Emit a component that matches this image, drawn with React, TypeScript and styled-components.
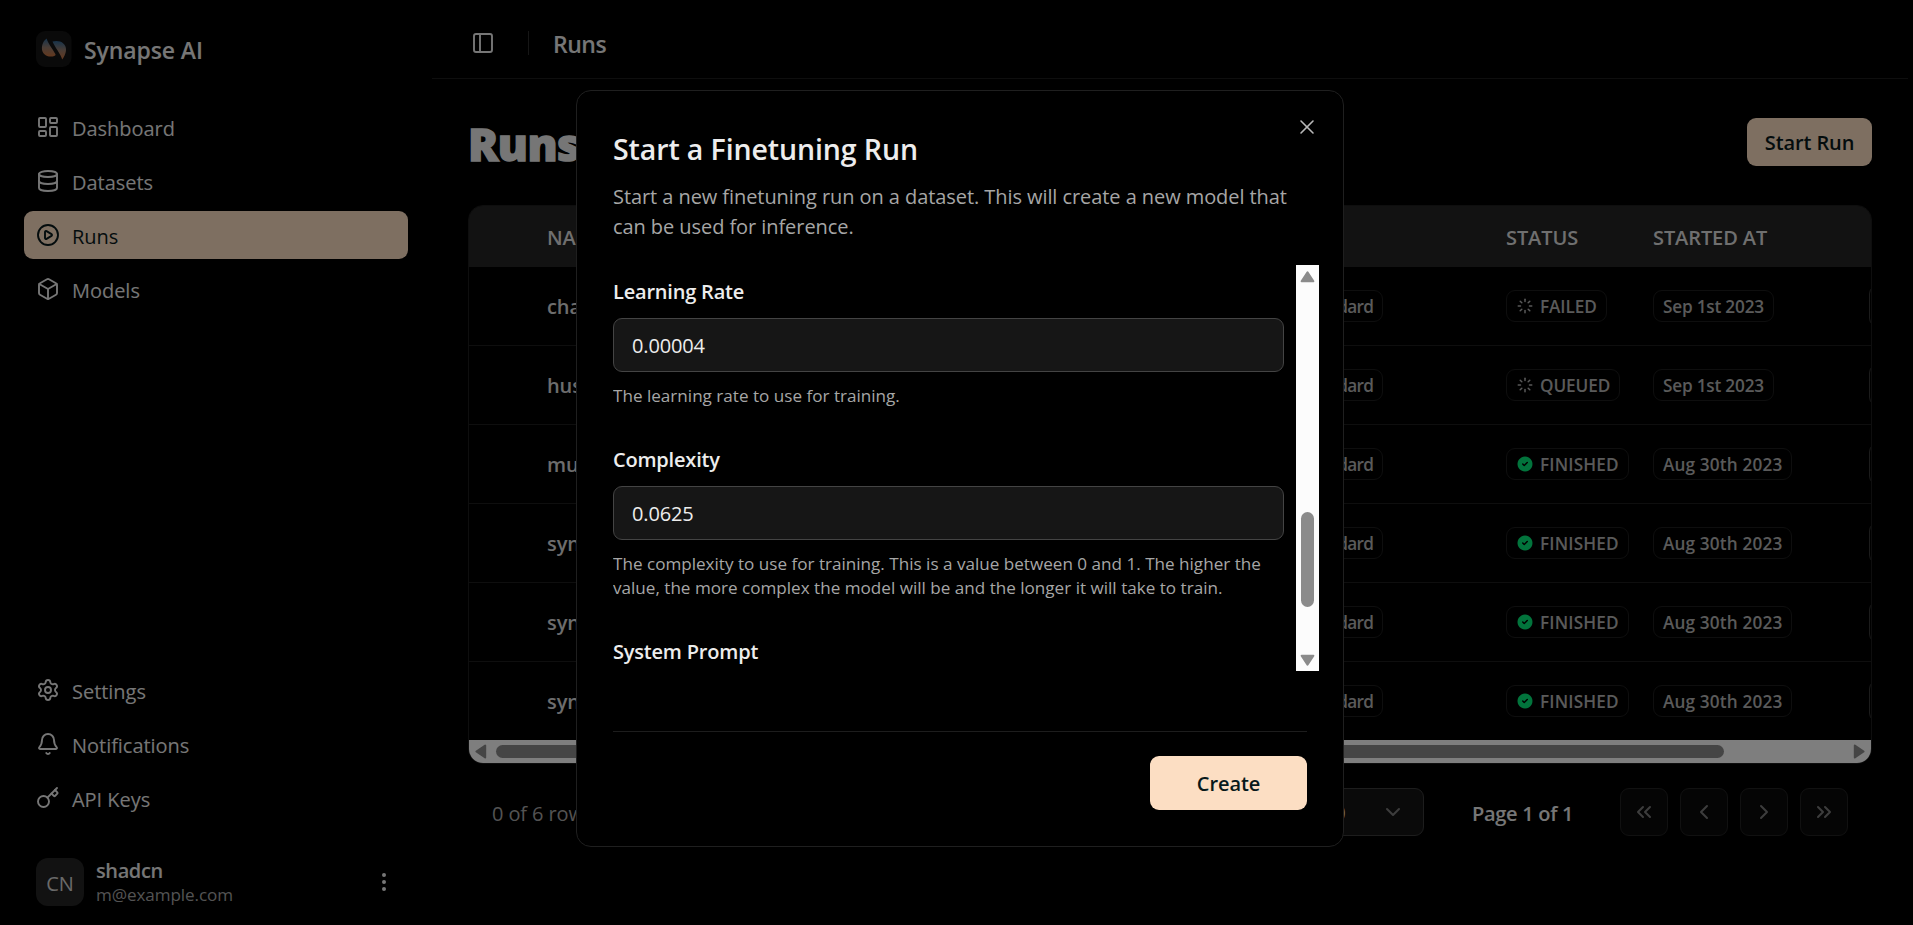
import React from "react";
import styled, { createGlobalStyle, css } from "styled-components";
import {
  Bell,
  Box,
  ChevronDown,
  ChevronLeft,
  ChevronRight,
  ChevronsLeft,
  ChevronsRight,
  CirclePlay,
  Database,
  EllipsisVertical,
  Key,
  LayoutDashboard,
  PanelLeft,
  Settings,
  X,
} from "lucide-react";
import { TbCircleCheckFilled, TbLoader } from "react-icons/tb";

const color = {
  bg: "#000000",
  text: "#ededed",
  muted: "#a6a6a6",
  primary: "#fcdec3",
  onPrimary: "#08191b",
  line: "#1d1d1d",
  header: "#242424",
  track: "#fcfcfc",
  thumb: "#8b8b8b",
};

const GlobalStyle = createGlobalStyle`
  *, *::before, *::after { box-sizing: border-box; }
  body {
    margin: 0;
    background: ${color.bg};
    color: ${color.text};
    font-family: "Open Sans", "Noto Sans", sans-serif;
    font-size: 20px;
    letter-spacing: -0.1px;
    overflow: hidden;
  }
  h1, h2, p { margin: 0; }
  svg { display: block; flex: none; }
`;

const Shell = styled.div`
  display: flex;
  width: 1908px;
  height: 925px;
`;

/* Sidebar */

const Sidebar = styled.aside`
  display: flex;
  flex-direction: column;
  flex: none;
  width: 432px;
  padding: 31px 24px 19px;
`;

const Brand = styled.div`
  display: flex;
  align-items: center;
  gap: 12px;
  height: 36px;
  padding-left: 12px;
  margin-bottom: 36px;
`;

const BrandName = styled.span`
  padding-top: 2px;
  font-size: 23px;
  font-weight: 600;
  line-height: 36px;
`;

const Nav = styled.nav<{ $end?: boolean }>`
  display: flex;
  flex-direction: column;
  gap: 6px;
  width: 384px;
  ${(p) =>
    p.$end &&
    css`
      margin-top: auto;
      margin-bottom: 36px;
    `}
`;

const NavItem = styled.a<{ $active?: boolean }>`
  display: flex;
  align-items: center;
  gap: 12px;
  height: 48px;
  padding: 0 12px;
  border-radius: 9px;
  color: ${(p) => (p.$active ? color.onPrimary : color.text)};
  background: ${(p) => (p.$active ? color.primary : "transparent")};
`;

const NavLabel = styled.span`
  padding-top: 2px;
  letter-spacing: -0.03px;
`;

const User = styled.div`
  display: flex;
  align-items: center;
  gap: 12px;
  height: 48px;
  padding: 0 12px;
`;

const Avatar = styled.div`
  display: grid;
  place-items: center;
  width: 48px;
  height: 48px;
  padding-top: 2px;
  border-radius: 12px;
  background: #242424;
  color: #d4d4d4;
`;

const UserText = styled.div`
  flex: 1;
`;

const UserName = styled.div`
  font-weight: 600;
  line-height: 26px;
  letter-spacing: -0.4px;
`;

const UserMail = styled.div`
  color: ${color.muted};
  font-size: 17.1px;
  line-height: 22px;
`;

/* Main column */

const Main = styled.main`
  flex: 1;
  min-width: 0;
`;

const TopBar = styled.header`
  display: flex;
  align-items: center;
  height: 79px;
  padding: 8px 39px 0;
  border-bottom: 1px solid ${color.line};
`;

const Divider = styled.span`
  width: 1px;
  height: 24px;
  margin: 0 24px 0 33px;
  background: #2c2c2c;
`;

const Crumb = styled.span`
  padding-top: 2px;
  font-size: 23px;
  font-weight: 600;
  letter-spacing: -0.5px;
`;

const Content = styled.div`
  display: flex;
  flex-direction: column;
  padding: 39px 36px 0;
`;

const TitleRow = styled.div`
  display: flex;
  align-items: center;
  justify-content: space-between;
  height: 48px;
  margin-bottom: 39px;
`;

const PageTitle = styled.h1`
  padding-top: 3px;
  font-size: 45px;
  font-weight: 800;
  line-height: 48px;
  letter-spacing: -0.6px;
  -webkit-text-stroke: 1.4px currentColor;
`;

const Button = styled.button<{ $large?: boolean }>`
  width: ${(p) => (p.$large ? 157 : 125)}px;
  height: ${(p) => (p.$large ? 54 : 48)}px;
  padding: 1px 0 0;
  border: 0;
  border-radius: 9px;
  background: ${color.primary};
  color: ${color.onPrimary};
  font: inherit;
  font-weight: ${(p) => (p.$large ? 550 : 600)};
  letter-spacing: -0.1px;
`;

const Table = styled.div`
  display: flex;
  flex-direction: column;
  height: 559px;
  overflow: hidden;
  border: 1px solid ${color.line};
  border-radius: 15px;
`;

const columns = css`
  display: grid;
  grid-template-columns: 78px 746px 213px 147px 216px 60px;
  align-items: center;
`;

const HeadRow = styled.div`
  ${columns}
  flex: none;
  height: 61px;
  padding-top: 1px;
  background: ${color.header};
  color: #dedede;
  font-weight: 600;
`;

const Row = styled.div`
  ${columns}
  flex: 1;
  border-bottom: 1px solid ${color.line};
  &:nth-last-child(2) {
    border-bottom: 0;
  }
`;

const RunName = styled.span`
  color: #dadada;
  font-weight: 600;
`;

const Badge = styled.span`
  display: inline-flex;
  align-items: center;
  justify-self: start;
  gap: 6px;
  height: 32px;
  padding: 0 9px;
  border: 1px solid ${color.line};
  border-radius: 9px;
  color: #b4b4b4;
  font-size: 17.2px;
  font-weight: 600;
  line-height: 28px;
`;

const BadgeText = styled.span<{ $spacing?: number }>`
  padding-top: 1px;
  letter-spacing: ${(p) => p.$spacing ?? -0.1}px;
`;

const RowAction = styled.span`
  width: 48px;
  height: 42px;
  border: 1px solid #383838;
  border-radius: 9px;
`;

const HScroll = styled.div`
  display: flex;
  align-items: center;
  flex: none;
  height: 23px;
  padding: 0 6px;
  background: ${color.track};
`;

const HThumb = styled.span`
  width: 1228px;
  height: 13px;
  margin-left: 9px;
  margin-right: auto;
  border-radius: 7px;
  background: ${color.thumb};
`;

const Pager = styled.div`
  display: flex;
  align-items: center;
  height: 48px;
  margin-top: 24px;
  padding: 0 24px;
`;

const Selected = styled.span`
  flex: 1;
  padding-top: 2px;
  color: ${color.muted};
`;

const PageSize = styled.div`
  display: flex;
  align-items: center;
  justify-content: space-between;
  width: 120px;
  height: 48px;
  padding: 0 18px;
  border: 1px solid #3a3a3a;
  border-radius: 9px;
  background: #151515;
`;

const PageCount = styled.span`
  width: 148px;
  margin-left: 48px;
  padding-top: 2px;
  font-weight: 600;
  letter-spacing: -0.3px;
`;

const PagerButtons = styled.div`
  display: flex;
  gap: 12px;
`;

const PagerButton = styled.span`
  display: grid;
  place-items: center;
  width: 48px;
  height: 48px;
  border: 1px solid #222222;
  border-radius: 9px;
  background: #0a0a0a;
  color: #7a7a7a;
`;

/* Dialog */

const Overlay = styled.div`
  position: fixed;
  inset: 0;
  background: rgba(0, 0, 0, 0.5);
`;

const Dialog = styled.section`
  position: fixed;
  top: 90px;
  left: 576px;
  display: flex;
  flex-direction: column;
  width: 768px;
  height: 757px;
  padding: 40px 36px 36px;
  border: 1px solid #1f1f1f;
  border-radius: 15px;
  background: ${color.bg};
`;

const Close = styled.span`
  position: absolute;
  top: 24px;
  right: 24px;
  color: #b8b8b8;
`;

const DialogTitle = styled.h2`
  font-size: 28.5px;
  font-weight: 600;
  line-height: 36px;
`;

const DialogText = styled.p`
  margin-top: 15px;
  color: ${color.muted};
  line-height: 30px;
  letter-spacing: -0.07px;
`;

const ScrollArea = styled.div`
  display: flex;
  justify-content: space-between;
  flex: none;
  width: 706px;
  height: 406px;
  margin-top: 23px;
`;

const Fields = styled.div`
  display: flex;
  flex-direction: column;
  gap: 38px;
  width: 671px;
  padding-top: 13px;
  overflow: hidden;
`;

const Field = styled.label`
  display: flex;
  flex-direction: column;
`;

const FieldLabel = styled.span`
  height: 40px;
  line-height: 28px;
  font-weight: 600;
  letter-spacing: -0.2px;
`;

const Input = styled.input`
  height: 54px;
  padding: 1px 18px 0;
  border: 1px solid #444444;
  border-radius: 9px;
  background: #161616;
  color: ${color.text};
  font: inherit;
  letter-spacing: -0.15px;
  outline: none;
`;

const Help = styled.span`
  margin-top: 12px;
  color: ${color.muted};
  font-size: 17.1px;
  line-height: 24px;
  letter-spacing: 0;
`;

const VScroll = styled.div`
  display: flex;
  flex-direction: column;
  align-items: center;
  width: 23px;
  padding: 6px 0 5px;
  background: ${color.track};
`;

const VThumb = styled.span`
  width: 13px;
  height: 95px;
  margin-top: 229px;
  margin-bottom: auto;
  border-radius: 7px;
  background: ${color.thumb};
`;

const DialogFooter = styled.div`
  display: flex;
  justify-content: flex-end;
  margin-top: auto;
  padding-top: 24px;
  border-top: 1px solid ${color.line};
`;

type Direction = "up" | "down" | "left" | "right";
const turn: Record<Direction, number> = { up: 0, right: 90, down: 180, left: 270 };

const Arrow = ({ to }: { to: Direction }) => {
  const upright = to === "up" || to === "down";
  return (
    <svg width={upright ? 15 : 12} height={upright ? 12 : 15} viewBox={upright ? "-7.5 -6 15 12" : "-6 -7.5 12 15"}>
      <path
        d="M0 -4.6 L5.9 4.2 L-5.9 4.2 Z"
        fill={color.thumb}
        stroke={color.thumb}
        strokeWidth="2"
        strokeLinejoin="round"
        transform={`rotate(${turn[to]})`}
      />
    </svg>
  );
};

const Logo = () => (
  <svg width="36" height="36" viewBox="0 0 36 36">
    <defs>
      <linearGradient id="leaf" x1="0" y1="0" x2="0" y2="1">
        <stop offset="0" stopColor="#2f6694" />
        <stop offset="0.5" stopColor="#947a6b" />
        <stop offset="1" stopColor="#c9713c" />
      </linearGradient>
    </defs>
    <rect width="35.5" height="36" rx="9" fill="#141414" />
    <path d="M10.7 7.5 C4 12 3.5 25.5 15 25.6 C17.5 25.6 19.5 25 19.6 23.8 C19.6 22 11.5 12 10.7 7.5Z" fill="url(#leaf)" />
    <path d="M16.5 10.6 C23 8.5 30.5 12 30 19 C29.8 23 27.5 27 26.2 28.4 C25 24 18.5 15.5 16.5 10.6Z" fill="url(#leaf)" />
  </svg>
);

const mainNav = [
  { label: "Dashboard", icon: LayoutDashboard },
  { label: "Datasets", icon: Database },
  { label: "Runs", icon: CirclePlay, active: true },
  { label: "Models", icon: Box },
];

const footerNav = [
  { label: "Settings", icon: Settings },
  { label: "Notifications", icon: Bell },
  { label: "API Keys", icon: Key },
];

const runs = [
  { name: "chat", status: "FAILED", date: "Sep 1st 2023" },
  { name: "husky", status: "QUEUED", date: "Sep 1st 2023" },
  { name: "music", status: "FINISHED", date: "Aug 30th 2023" },
  { name: "synapse", status: "FINISHED", date: "Aug 30th 2023" },
  { name: "synapse", status: "FINISHED", date: "Aug 30th 2023" },
  { name: "synapse", status: "FINISHED", date: "Aug 30th 2023" },
];

export default function App() {
  return (
    <>
      <GlobalStyle />
      <Shell>
        <Sidebar>
          <Brand>
            <Logo />
            <BrandName>Synapse AI</BrandName>
          </Brand>
          <Nav>
            {mainNav.map(({ label, icon: Icon, active }) => (
              <NavItem key={label} $active={active}>
                <Icon size={24} strokeWidth={1.9} />
                <NavLabel>{label}</NavLabel>
              </NavItem>
            ))}
          </Nav>
          <Nav $end>
            {footerNav.map(({ label, icon: Icon }) => (
              <NavItem key={label}>
                <Icon size={24} strokeWidth={1.9} />
                <NavLabel>{label}</NavLabel>
              </NavItem>
            ))}
          </Nav>
          <User>
            <Avatar>CN</Avatar>
            <UserText>
              <UserName>shadcn</UserName>
              <UserMail>m@example.com</UserMail>
            </UserText>
            <EllipsisVertical size={24} />
          </User>
        </Sidebar>

        <Main>
          <TopBar>
            <PanelLeft size={24} strokeWidth={1.9} />
            <Divider />
            <Crumb>Runs</Crumb>
          </TopBar>
          <Content>
            <TitleRow>
              <PageTitle>Runs</PageTitle>
              <Button>Start Run</Button>
            </TitleRow>
            <Table>
              <HeadRow>
                <span />
                <span>NAME</span>
                <span>TYPE</span>
                <span>STATUS</span>
                <span>STARTED AT</span>
              </HeadRow>
              {runs.map((run, i) => (
                <Row key={i}>
                  <span />
                  <RunName>{run.name}</RunName>
                  <Badge>
                    <BadgeText $spacing={-0.7}>Standard</BadgeText>
                  </Badge>
                  <Badge>
                    {run.status === "FINISHED" ? (
                      <TbCircleCheckFilled size={18} color="#04e878" />
                    ) : (
                      <TbLoader size={18} />
                    )}
                    <BadgeText $spacing={run.status === "FINISHED" ? 0.15 : -0.1}>{run.status}</BadgeText>
                  </Badge>
                  <Badge>
                    <BadgeText $spacing={run.date.startsWith("Aug") ? 0.15 : -0.2}>{run.date}</BadgeText>
                  </Badge>
                  <RowAction />
                </Row>
              ))}
              <HScroll>
                <Arrow to="left" />
                <HThumb />
                <Arrow to="right" />
              </HScroll>
            </Table>
            <Pager>
              <Selected>0 of 6 row(s) selected.</Selected>
              <PageSize>
                <span>10</span>
                <ChevronDown size={24} color="#7a7a7a" />
              </PageSize>
              <PageCount>Page 1 of 1</PageCount>
              <PagerButtons>
                {[ChevronsLeft, ChevronLeft, ChevronRight, ChevronsRight].map((Icon, i) => (
                  <PagerButton key={i}>
                    <Icon size={24} />
                  </PagerButton>
                ))}
              </PagerButtons>
            </Pager>
          </Content>
        </Main>
      </Shell>

      <Overlay />
      <Dialog>
        <Close>
          <X size={24} strokeWidth={1.6} />
        </Close>
        <DialogTitle>Start a Finetuning Run</DialogTitle>
        <DialogText>
          Start a new finetuning run on a dataset. This will create a new model that can be used for inference.
        </DialogText>
        <ScrollArea>
          <Fields>
            <Field>
              <FieldLabel>Learning Rate</FieldLabel>
              <Input defaultValue="0.00004" />
              <Help>The learning rate to use for training.</Help>
            </Field>
            <Field>
              <FieldLabel>Complexity</FieldLabel>
              <Input defaultValue="0.0625" />
              <Help>
                The complexity to use for training. This is a value between 0 and 1. The higher the value, the more
                complex the model will be and the longer it will take to train.
              </Help>
            </Field>
            <Field>
              <FieldLabel>System Prompt</FieldLabel>
            </Field>
          </Fields>
          <VScroll>
            <Arrow to="up" />
            <VThumb />
            <Arrow to="down" />
          </VScroll>
        </ScrollArea>
        <DialogFooter>
          <Button $large>Create</Button>
        </DialogFooter>
      </Dialog>
    </>
  );
}
